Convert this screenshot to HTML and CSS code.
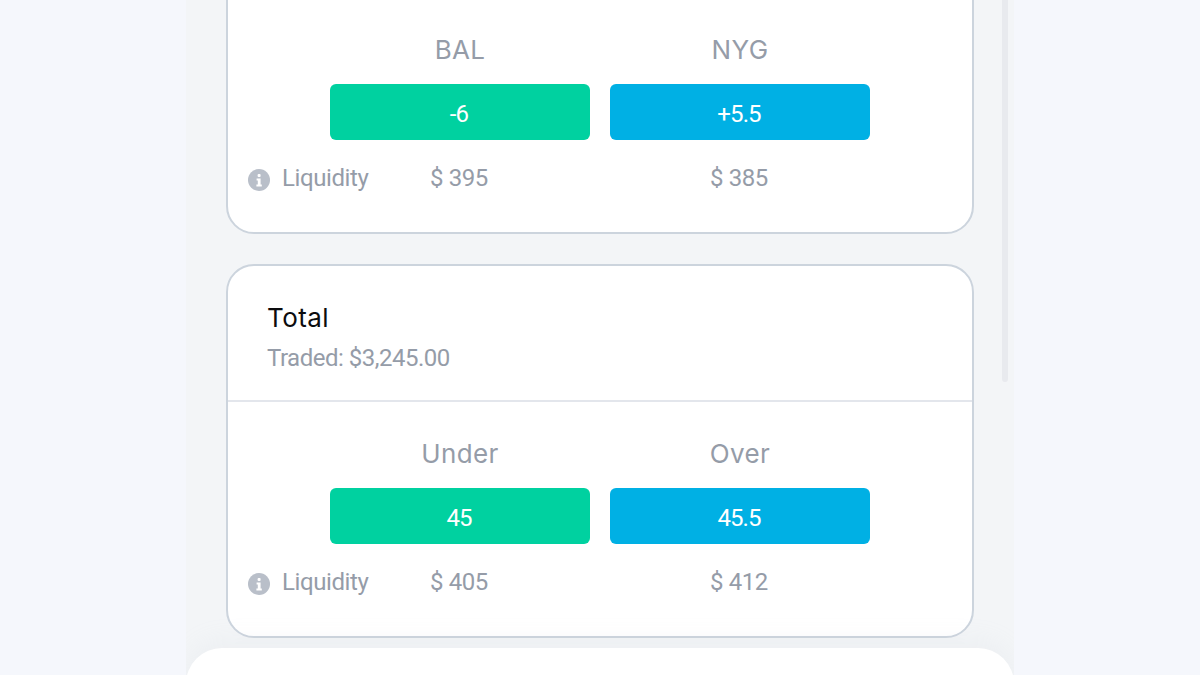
FILE: index.html
```html
<!DOCTYPE html>
<html lang="en">
<head>
<meta charset="utf-8">
<title>Market</title>
<link rel="stylesheet" href="styles.css">
</head>
<body>
<div class="panel">
  <div class="scrollbar"></div>
  <section class="card card-first">
    <div class="market market-clipped">
      <div></div><div class="side">BAL</div><div class="side">NYG</div><div></div>
      <div></div><button class="odds odds-green">-6</button><button class="odds odds-blue">+5.5</button><div></div>
      <div class="liq-label"><svg class="info" viewBox="0 0 22 22"><circle cx="11" cy="11" r="11" fill="#b9bfc9"/><rect x="9.6" y="5" width="3" height="3" rx="1" fill="#fff"/><path d="M8.6 9.6h4v6h1.2v1.9H8.4v-1.9h1.4v-4.1H8.6z" fill="#fff"/></svg><span>Liquidity</span></div>
      <div class="liq">$ 395</div><div class="liq">$ 385</div><div></div>
    </div>
  </section>
  <section class="card">
    <header class="card-head">
      <h2 class="card-title">Total</h2>
      <p class="card-sub">Traded: $3,245.00</p>
    </header>
    <div class="market">
      <div></div><div class="side">Under</div><div class="side">Over</div><div></div>
      <div></div><button class="odds odds-green">45</button><button class="odds odds-blue">45.5</button><div></div>
      <div class="liq-label"><svg class="info" viewBox="0 0 22 22"><circle cx="11" cy="11" r="11" fill="#b9bfc9"/><rect x="9.6" y="5" width="3" height="3" rx="1" fill="#fff"/><path d="M8.6 9.6h4v6h1.2v1.9H8.4v-1.9h1.4v-4.1H8.6z" fill="#fff"/></svg><span>Liquidity</span></div>
      <div class="liq">$ 405</div><div class="liq">$ 412</div><div></div>
    </div>
  </section>
  <div class="sheet"></div>
</div>
</body>
</html>
```

FILE: styles.css
```css
* { box-sizing: border-box; }
html, body { margin: 0; height: 675px; overflow: hidden; }
body {
  background: #f5f7fc;
  display: flex;
  justify-content: center;
  font-family: "Roboto", "Liberation Sans", sans-serif;
}
.panel {
  position: relative;
  width: 828px;
  height: 675px;
  overflow: hidden;
  background: #f3f5f7;
  padding: 0 40px;
  display: flex;
  flex-direction: column;
  gap: 30px;
}
.scrollbar {
  position: absolute;
  left: 816px;
  top: 0;
  width: 6px;
  height: 382px;
  border-radius: 0 0 3px 3px;
  background: #e8eaee;
}
.card {
  flex: none;
  background: #fff;
  border: 2px solid #ccd4dd;
  border-radius: 28px;
}
.card-first { margin-top: -40px; }
.market-clipped { margin-top: 36px; }
.card-head {
  height: 136px;
  padding: 36px 39px 0;
  border-bottom: 2px solid #e3e6ec;
}
.card-title {
  margin: 0;
  font: 400 26px/32px "Inter", sans-serif;
  letter-spacing: 0.4px;
  color: #0c0c0e;
}
.card-sub {
  margin: 9px 0 0;
  font: 400 24px/30px "Roboto", sans-serif;
  letter-spacing: -0.5px;
  color: #959ca8;
}
.market {
  display: grid;
  grid-template-columns: 82px 260px 260px 82px;
  grid-template-rows: 52px 56px 76px;
  column-gap: 20px;
  row-gap: 0;
  padding: 34px 0 16px;
}
.side {
  font: 400 26px/36px "Inter", sans-serif;
  letter-spacing: 0.35px;
  color: #959ca8;
  text-align: center;
}
.odds {
  align-self: start;
  margin: 0;
  border: 0;
  padding: 3px 2px 0 0;
  height: 56px;
  border-radius: 6px;
  color: #fff;
  font: 400 24px/50px "Roboto", sans-serif;
  letter-spacing: -0.9px;
  text-align: center;
}
.odds-green { background: #00d1a0; }
.odds-blue { background: #00b0e4; }
.liq-label {
  display: flex;
  align-items: center;
  gap: 12px;
  padding: 0 0 0 20px;
  white-space: nowrap;
  font: 400 24px/30px "Roboto", sans-serif;
  letter-spacing: -0.4px;
  color: #959ca8;
}
.info { width: 22px; height: 22px; flex: none; margin-top: 3px; }
.liq {
  padding-right: 2px;
  font: 400 24px/76px "Roboto", sans-serif;
  letter-spacing: -0.4px;
  color: #959ca8;
  text-align: center;
}
.sheet {
  position: absolute;
  left: 0;
  right: 0;
  top: 648px;
  height: 60px;
  background: #fff;
  border-radius: 36px 36px 0 0;
  box-shadow: 0 -8px 24px rgba(200, 205, 215, 0.12);
}
```
